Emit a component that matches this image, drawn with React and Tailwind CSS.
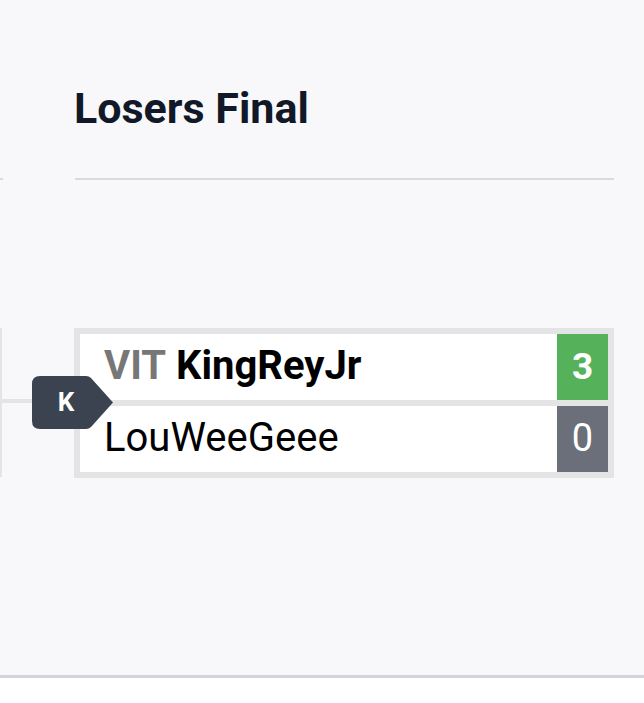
export default function App() {
  return (
    <div className="min-h-screen bg-white" style={{ fontFamily: 'Roboto, "Liberation Sans", sans-serif' }}>
      <div className="relative flex h-[678px] border-b-[3px] border-[#d3d5da] bg-[#f8f8fa]">
        <div className="relative w-[74px] shrink-0">
          <div className="absolute left-0 top-[178px] h-[2px] w-[3px] bg-[#d9dadf]" />
          <div className="absolute left-0 top-[328px] h-[149px] w-[2px] bg-[#e4e4e4]" />
          <div className="absolute left-0 top-[399px] h-[4px] w-[40px] bg-[#e4e4e4]" />
        </div>

        <div className="w-[540px] shrink-0">
          <h2 className="mt-[87px] text-[43px] font-bold leading-[43px] text-[#111827]">Losers Final</h2>
          <div className="ml-[1px] mt-[48px] h-[2px] bg-[#d9dadf]" />

          <div className="mt-[148px] flex flex-col gap-[6px] border-[6px] border-[#e4e4e4] bg-[#e4e4e4]">
            <div className="flex h-[66px] items-center bg-white">
              <div className="flex-1 pb-[3px] pl-[24px] text-[40px] leading-none">
                <span className="font-bold text-[#777777]">VIT</span>{' '}
                <span className="font-bold text-black">KingReyJr</span>
              </div>
              <div className="flex h-full w-[51px] items-center justify-center bg-[#55b15a] pb-[2px] text-[37px] font-bold leading-none text-white">3</div>
            </div>
            <div className="flex h-[66px] items-center bg-white">
              <div className="flex-1 pb-[3px] pl-[24px] text-[40px] leading-none text-black">LouWeeGeee</div>
              <div className="flex h-full w-[51px] items-center justify-center bg-[#6a6f79] pb-[2px] text-[38px] leading-none text-white">0</div>
            </div>
          </div>
        </div>

        <div className="absolute left-[32px] top-[376px] h-[53px] w-[81px]">
          <svg width="81" height="53" viewBox="0 0 81 53" className="absolute inset-0">
            <path d="M8 0 H54 Q57 0 59 2 L81 26.5 L59 51 Q57 53 54 53 H8 Q0 53 0 45 V8 Q0 0 8 0 Z" fill="#3c4350" />
          </svg>
          <div className="absolute left-0 top-0 flex h-[53px] w-[68px] items-center justify-center pb-[2px] text-[26px] font-bold leading-none text-white">K</div>
        </div>
      </div>
    </div>
  );
}
